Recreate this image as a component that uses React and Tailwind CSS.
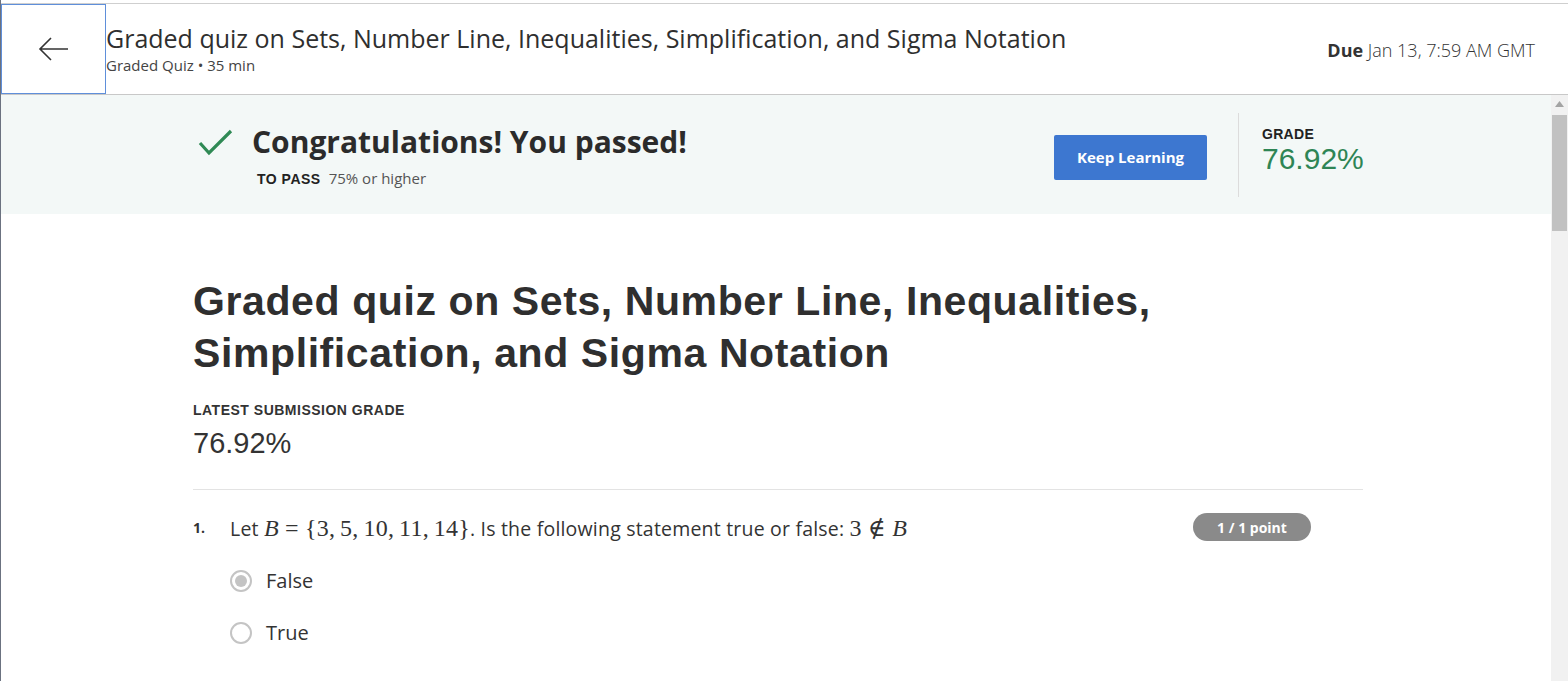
import React from "react";

const os = { fontFamily: '"Open Sans", "Liberation Sans", sans-serif' };
const ar = { fontFamily: '"Liberation Sans", Arial, sans-serif' };
const mathF = { fontFamily: '"Liberation Serif", "DejaVu Serif", serif', fontSize: "24px" };

function Radio({ checked, label }) {
  return (
    <div className="flex items-center h-[22px]">
      <span className="w-[22px] h-[22px] rounded-full border-2 border-[#c4c4c4] flex items-center justify-center bg-white">
        {checked && <span className="w-[12px] h-[12px] rounded-full bg-[#c4c4c4]" />}
      </span>
      <span className="ml-[14px] text-[20px] text-[#333]" style={os}>{label}</span>
    </div>
  );
}

export default function App() {
  return (
    <div className="w-[1568px] h-[681px] overflow-hidden bg-white border-l border-[#6b7280] flex flex-col" style={os}>
      <div className="h-[4px] border-b border-[#cfcfcf] shrink-0" />
      <div className="h-[91px] border-b border-[#c8c8c8] flex items-stretch shrink-0">
        <button className="w-[105px] h-[90px] border border-[#5f8fda] flex items-center justify-center shrink-0">
          <svg width="34" height="34" viewBox="0 0 34 34" fill="none" stroke="#333" strokeWidth="1.6">
            <path d="M31 17H3M14 6L3 17l11 11" />
          </svg>
        </button>
        <div className="flex-1 flex flex-col pt-[19px]">
          <div className="text-[25px] leading-[30px]" style={{ ...os, fontWeight: 400, color: "#2f2f2f" }}>
            Graded quiz on Sets, Number Line, Inequalities, Simplification, and Sigma Notation
          </div>
          <div className="text-[15px] leading-[18px] text-[#444] mt-[3px]">Graded Quiz • 35 min</div>
        </div>
        <div className="pt-[33px] pr-[33px] text-[18px] text-[#333]">
          <span className="font-bold">Due</span> <span style={{ fontWeight: 300 }}>Jan 13, 7:59 AM GMT</span>
        </div>
      </div>
      <div className="flex flex-1 min-h-0">
        <div className="flex-1 overflow-hidden">
          <div className="bg-[#f3f8f7] h-[119px]">
            <div className="ml-[192px] w-[1170px] h-full flex items-start">
              <div className="flex flex-col pt-[27px]">
                <div className="flex items-center">
                  <svg width="40" height="32" viewBox="0 0 40 32" fill="none" stroke="#2f8a55" strokeWidth="3.2" className="ml-[4px] mt-[2px]">
                    <path d="M3 16l9 10L34 4" />
                  </svg>
                  <span className="ml-[15px] text-[30px] leading-[40px] font-bold text-[#2b2b2b]">Congratulations! You passed!</span>
                </div>
                <div className="ml-[64px] mt-[5px] flex items-baseline">
                  <span className="text-[14px] font-bold text-[#222] tracking-[0.5px]" style={ar}>TO PASS</span>
                  <span className="ml-[8px] text-[15px] text-[#555]">75% or higher</span>
                </div>
              </div>
              <div className="flex-1" />
              <button className="mt-[40px] w-[153px] h-[45px] rounded-[2px] bg-[#3d77d0] text-white text-[15px] font-bold">
                Keep Learning
              </button>
              <div className="ml-[31px] mt-[18px] h-[84px] border-l border-[#dcdcdc]" />
              <div className="ml-[23px] pt-[32px] w-[101px]" style={ar}>
                <div className="text-[14px] leading-[15px] text-[#222] font-semibold tracking-[0.3px]">GRADE</div>
                <div className="text-[30px] leading-[34px] text-[#2e8555]">76.92%</div>
              </div>
            </div>
          </div>
          <div className="ml-[192px] w-[1170px]">
            <h1 className="mt-[61px] text-[41px] leading-[52px] font-bold text-[#2f2f2f] tracking-[0.6px]" style={ar}>
              Graded quiz on Sets, Number Line, Inequalities,<br />Simplification, and Sigma Notation
            </h1>
            <div className="mt-[23px] text-[14px] leading-[16px] font-bold text-[#333] tracking-[0.5px]" style={ar}>
              LATEST SUBMISSION GRADE
            </div>
            <div className="mt-[8px] text-[29px] leading-[34px] text-[#333]" style={ar}>
              76.92%
            </div>
            <div className="mt-[29px] border-t border-[#e3e3e3]" />
            <div className="mt-[25px] flex items-start">
              <span className="w-[37px] text-[14px] leading-[26px] font-bold text-[#333]">1.</span>
              <div className="flex-1">
                <div className="text-[19.5px] leading-[26px] text-[#333] tracking-[0.2px]">
                  Let{" "}
                  <span style={mathF}>
                    <i>B</i>&nbsp;=&nbsp;{"{"}3,&thinsp;5,&thinsp;10,&thinsp;11,&thinsp;14{"}"}
                  </span>
                  . Is the following statement true or false:{" "}
                  <span style={mathF}>
                    3&nbsp;∉&nbsp;<i>B</i>
                  </span>
                </div>
                <div className="mt-[28px] flex flex-col gap-[30px]">
                  <Radio checked label="False" />
                  <Radio label="True" />
                </div>
              </div>
              <div className="mr-[52px] mt-[-2px] h-[28px] w-[118px] rounded-full bg-[#8a8a8a] text-white text-[14px] font-bold flex items-center justify-center">
                1 / 1 point
              </div>
            </div>
          </div>
        </div>
        <div className="w-[17px] bg-[#f1f1f1] flex flex-col items-center shrink-0">
          <svg width="9" height="6" viewBox="0 0 9 6" className="mt-[6px]"><path d="M0 6L4.5 0L9 6z" fill="#a3a3a3" /></svg>
          <div className="mt-[8px] w-[15px] h-[116px] bg-[#c1c1c1]" />
        </div>
      </div>
    </div>
  );
}
